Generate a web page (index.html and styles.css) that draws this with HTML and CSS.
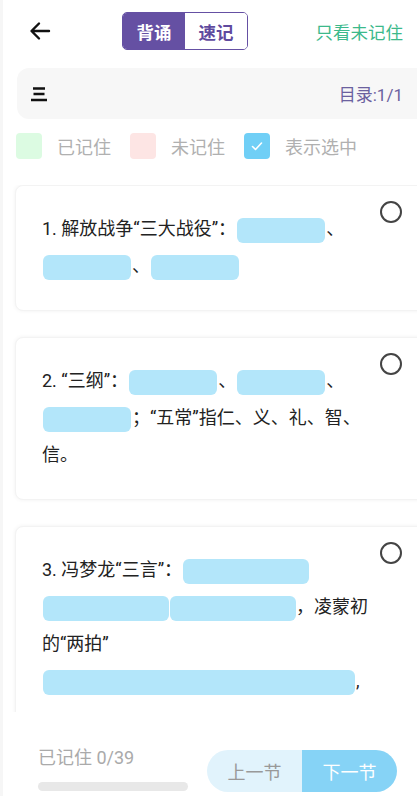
FILE: index.html
```html
<!DOCTYPE html>
<html lang="zh">
<head>
<meta charset="utf-8">
<link rel="stylesheet" href="styles.css">
</head>
<body>
<div class="page">
  <header class="topbar">
    <div class="back">
      <svg width="24" height="24" viewBox="0 0 24 24"><path d="M21 12H4M11 4.5L3.5 12L11 19.5" fill="none" stroke="#111" stroke-width="2.4" stroke-linecap="round" stroke-linejoin="round"/></svg>
    </div>
    <div class="seg">
      <span class="seg-item active">背诵</span>
      <span class="seg-item">速记</span>
    </div>
    <div class="only">只看未记住</div>
  </header>

  <div class="toolbar">
    <svg class="menu" width="18" height="16" viewBox="0 0 18 16"><path d="M3 2.5H15M3.5 8H14.5M1 14H17" stroke="#111" stroke-width="2.4"/></svg>
    <span class="toc">目录:1/1</span>
  </div>

  <div class="legend">
    <span class="sw green"></span><span class="lg-text">已记住</span>
    <span class="sw pink"></span><span class="lg-text">未记住</span>
    <span class="sw blue"><svg width="26" height="26" viewBox="0 0 26 26"><path d="M8.5 13.5L11.5 16.5L17.5 10" fill="none" stroke="#fff" stroke-width="1.6" stroke-linecap="round" stroke-linejoin="round"/></svg></span><span class="lg-text">表示选中</span>
  </div>

  <div class="list">
    <div class="card">
      <span class="radio"></span>
      <p class="q">1. 解放战争“三大战役”：<span class="blank"></span>、<span class="blank"></span>、<span class="blank"></span></p>
    </div>
    <div class="card">
      <span class="radio"></span>
      <p class="q">2. “三纲”：<span class="blank"></span>、<span class="blank"></span>、<span class="blank"></span>；“五常”指仁、义、礼、智、信。</p>
    </div>
    <div class="card">
      <span class="radio"></span>
      <p class="q">3. 冯梦龙“三言”：<span class="blank w126"></span><span class="blank w126 tight"></span><span class="blank w126 tight"></span>，凌蒙初的“两拍”<span class="blank w312"></span>,</p>
    </div>
  </div>

  <footer class="bottom">
    <div class="progress">
      <div class="count">已记住 0/39</div>
      <div class="bar"></div>
    </div>
    <div class="nav">
      <span class="prev">上一节</span>
      <span class="next">下一节</span>
    </div>
  </footer>
</div>
</body>
</html>
```

FILE: styles.css
```css
* { box-sizing: border-box; }
html, body { margin: 0; padding: 0; background: #fff; }
body {
  font-family: Roboto, "Noto Sans CJK SC", "Noto Sans", sans-serif;
  color: #222;
  overflow: hidden;
}
.page {
  width: 417px;
  height: 796px;
  border-left: 3px solid #f6f6f6;
  overflow: hidden;
  display: flex;
  flex-direction: column;
}
.topbar {
  height: 62px;
  display: flex;
  align-items: center;
  padding: 0 14px 0 25px;
}
.back { width: 24px; height: 24px; display: flex; }
.seg {
  margin-left: 70px;
  display: flex;
  height: 38px;
  border: 1.5px solid #6550a3;
  border-radius: 5px;
  overflow: hidden;
}
.seg-item {
  width: 62px;
  display: flex;
  align-items: center;
  justify-content: center;
  font-size: 17.5px;
  font-weight: 700;
  color: #5f4a9e;
  background: #fff;
}
.seg-item.active { background: #6550a3; color: #fff; }
.only {
  margin-left: auto;
  font-size: 17.5px;
  color: #3cb98b;
}
.toolbar {
  margin: 6px 0 0 14px;
  height: 51px;
  background: #f7f7f7;
  border-radius: 12px 0 0 12px;
  display: flex;
  align-items: center;
  padding: 0 14px 0 13px;
}
.menu { display: block; }
.toc { margin-left: auto; font-size: 17px; color: #6b619f; }
.legend {
  margin: 14px 0 0 13px;
  height: 26px;
  display: flex;
  align-items: center;
}
.sw {
  width: 26px; height: 26px;
  border-radius: 4px;
  display: block;
  flex: none;
}
.sw.green { background: #dcfbe2; }
.sw.pink { background: #fde5e4; }
.sw.blue { background: #70cff6; }
.sw svg { display: block; }
.lg-text {
  font-size: 18px;
  color: #b0b0b0;
  margin: 0 19px 0 15px;
}
.list {
  margin-top: 26px;
  height: 527px;
  overflow: hidden;
  display: flex;
  flex-direction: column;
  gap: 26px;
  padding: 0 0 0 12px;
}
.card {
  position: relative;
  flex: none;
  margin-right: -20px;
  background: #fff;
  border-radius: 8px;
  box-shadow: 0 0 4px rgba(0,0,0,0.06);
  border: 1px solid #f3f3f3;
  padding: 24px 67px 26px 26px;
}
.radio {
  position: absolute;
  top: 15px;
  right: 34px;
  width: 22px; height: 22px;
  border: 2.4px solid #444;
  border-radius: 50%;
}
.q {
  margin: 0;
  font-size: 18px;
  line-height: 37px;
  color: #222;
}
.blank {
  display: inline-block;
  width: 88px;
  height: 25px;
  vertical-align: middle;
  background: #b3e6fa;
  border-radius: 6px;
  margin: 0 1px;
}
.blank.w126 { width: 126px; }
.blank.tight { margin-right: 0; }
.blank.w312 { width: 312px; }
.bottom {
  flex: 1;
  background: #fff;
  display: flex;
  align-items: flex-start;
  padding: 33px 0 0 35px;
}
.progress { width: 150px; }
.count { font-size: 18px; color: #aaa; line-height: 26px; }
.bar {
  margin-top: 11px;
  height: 9px;
  background: #e8e8e8;
  border-radius: 5px;
}
.nav {
  margin-left: 19px;
  margin-top: 5px;
  display: flex;
  height: 42px;
  border-radius: 21px;
  overflow: hidden;
}
.nav span {
  width: 95px;
  display: flex;
  align-items: center;
  justify-content: center;
  font-size: 18px;
}
.prev { background: #e1f3fc; color: #999; }
.next { background: #86d3f6; color: #fff; }
```
